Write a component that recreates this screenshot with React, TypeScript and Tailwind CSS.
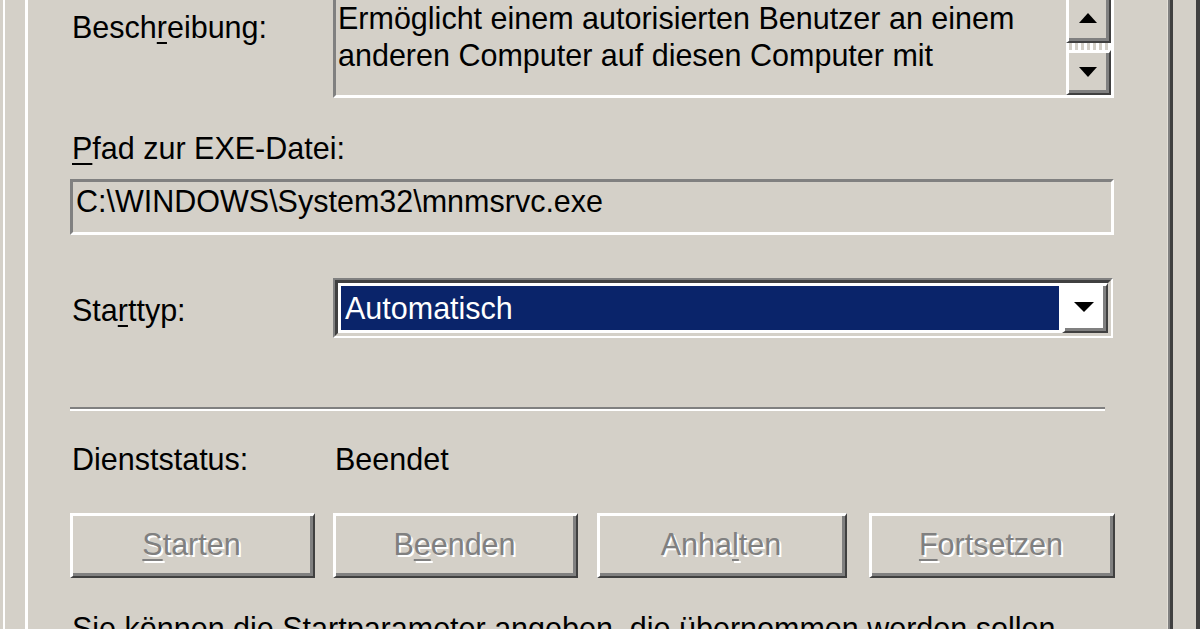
import React from "react";

const FONT = { fontFamily: '"Liberation Sans", Arial, sans-serif' };

function Raised({ children, className = "" }: { children?: React.ReactNode; className?: string }) {
  return (
    <div className={"border-t-[3px] border-l-[3px] border-t-white border-l-white border-b-[2px] border-r-[2px] border-b-[#404040] border-r-[#404040] " + className}>
      <div className="h-full w-full border-b-[3px] border-r-[3px] border-b-[#808080] border-r-[#808080] flex items-center justify-center">
        {children}
      </div>
    </div>
  );
}

function UpArrow() {
  return (
    <svg width="18" height="10" viewBox="0 0 18 10"><polygon points="9,0 18,10 0,10" fill="#000" /></svg>
  );
}
function DownArrow({ w = 18, h = 10 }: { w?: number; h?: number }) {
  return (
    <svg width={w} height={h} viewBox={`0 0 ${w} ${h}`}><polygon points={`0,0 ${w},0 ${w / 2},${h}`} fill="#000" /></svg>
  );
}

function DisabledBtn({ pre, u, post, className }: { pre: string; u: string; post: string; className: string }) {
  return (
    <Raised className={"h-[65px] " + className}>
      <span className="text-[#808080] [text-shadow:2px_2px_0_#ffffff] leading-[37px]">
        {pre}
        <span className="underline decoration-[2px] underline-offset-[4px]">{u}</span>
        {post}
      </span>
    </Raised>
  );
}

export default function App() {
  return (
    <div className="flex h-[629px] w-[1200px] overflow-hidden bg-[#d4d0c8] text-[30.5px] text-black" style={FONT}>
      <div className="w-[3px] shrink-0" />
      <div className="w-[2px] shrink-0 bg-white" />
      <div className="w-[20px] shrink-0" />
      {/* tab page */}
      <div className="flex w-[1148px] shrink-0 border-l-[3px] border-l-white">
        <div className="flex-1 pl-[42px]">
          <div className="flex w-[1045px] flex-col">
            {/* Description row */}
            <div className="mt-[-8px] flex h-[106px]">
              <div className="w-[263px] shrink-0 pl-[2px] pt-[17px] leading-[37px]">
                Besch<span className="underline decoration-[2px] underline-offset-[4px]">r</span>eibung:
              </div>
              <div className="flex w-[781px] border-t-[3px] border-l-[3px] border-t-[#808080] border-l-[#808080] border-b-[3px] border-r-[3px] border-b-white border-r-white">
                <div className="flex-1 pl-[2px] pt-[5px] leading-[37px]">
                  <div>Ermöglicht einem autorisierten Benutzer an einem</div>
                  <div>anderen Computer auf diesen Computer mit</div>
                </div>
                <div className="flex w-[45px] flex-col">
                  <Raised className="h-[48px]"><UpArrow /></Raised>
                  <div className="h-[7px] bg-[repeating-linear-gradient(90deg,#ffffff_0_3px,#d4d0c8_3px_6px)]" />
                  <Raised className="flex-1"><DownArrow /></Raised>
                </div>
              </div>
            </div>

            {/* Path label */}
            <div className="mt-[32px] pl-[2px] leading-[37px]">
              <span className="underline decoration-[2px] underline-offset-[4px]">P</span>fad zur EXE-Datei:
            </div>
            {/* Path box */}
            <div className="mt-[12px] h-[56px] w-[1044px] border-t-[3px] border-l-[3px] border-t-[#808080] border-l-[#808080] border-b-[3px] border-r-[3px] border-b-white border-r-white pl-[3px] leading-[37px]">
              <div className="pt-[1px]">C:\WINDOWS\System32\mnmsrvc.exe</div>
            </div>

            {/* Starttyp row */}
            <div className="mt-[43px] flex h-[60px]">
              <div className="w-[263px] shrink-0 pl-[2px] pt-[14px] leading-[37px]">
                Sta<span className="underline decoration-[2px] underline-offset-[4px]">r</span>ttyp:
              </div>
              <div className="w-[780px] border-t-[2px] border-l-[2px] border-t-[#808080] border-l-[#808080] border-b-[2px] border-r-[2px] border-b-white border-r-white">
                <div className="flex h-full border-t-[3px] border-l-[3px] border-t-[#404040] border-l-[#404040] border-b-[3px] border-r-[3px] border-b-[#d4d0c8] border-r-[#d4d0c8] bg-white">
                  <div className="flex-1 p-[3px]">
                    <div className="flex h-full items-center bg-[#0a246a] pl-[4px] leading-[37px] text-white">Automatisch</div>
                  </div>
                  <Raised className="w-[46px]"><DownArrow w={20} h={10} /></Raised>
                </div>
              </div>
            </div>

            {/* Separator */}
            <div className="mt-[69px] w-[1035px]">
              <div className="h-[2px] bg-[#808080]" />
              <div className="h-[2px] bg-white" />
            </div>

            {/* Dienststatus */}
            <div className="mt-[30px] flex leading-[37px]">
              <div className="w-[263px] shrink-0 pl-[2px]">Dienststatus:</div>
              <div className="pl-[2px]">Beendet</div>
            </div>

            {/* Buttons */}
            <div className="mt-[35px] flex">
              <DisabledBtn pre="" u="S" post="tarten" className="w-[245px]" />
              <DisabledBtn pre="B" u="e" post="enden" className="ml-[18px] w-[245px]" />
              <DisabledBtn pre="Anha" u="l" post="ten" className="ml-[19px] w-[250px]" />
              <DisabledBtn pre="" u="F" post="ortsetzen" className="ml-[22px] w-[246px]" />
            </div>

            {/* Bottom text */}
            <div className="mt-[32px] whitespace-nowrap pl-[2px] leading-[37px]">
              Sie können die Startparameter angeben, die übernommen werden sollen,
            </div>
          </div>
        </div>
        <div className="w-[1px] shrink-0 bg-[#e4e0d8]" />
        <div className="w-[2px] shrink-0 bg-[#808080]" />
        <div className="w-[3px] shrink-0 bg-[#404040]" />
      </div>
      <div className="flex-1" />
      <div className="w-[4px] shrink-0 bg-[#404040]" />
    </div>
  );
}
